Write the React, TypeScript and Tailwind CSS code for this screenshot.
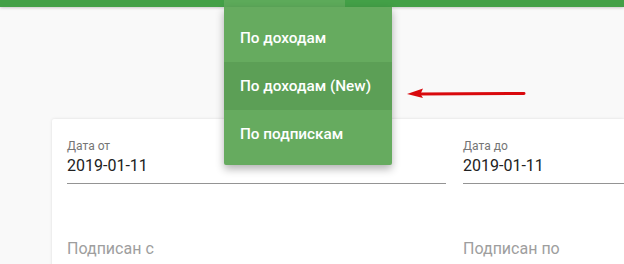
import React from "react";

function Field({ label, value }: { label: string; value: string }) {
  return (
    <div className="flex flex-col">
      <span className="text-[12px] leading-[14px] text-[#757575]">{label}</span>
      <span className="mt-[2px] pb-[6px] text-[16px] leading-[22px] text-[#212121] border-b border-[#949494]">
        {value}
      </span>
    </div>
  );
}

export default function App() {
  const items = ["По доходам", "По доходам (New)", "По подпискам"];

  return (
    <div className="relative w-[624px] h-[264px] overflow-hidden bg-[#f9f9f9] font-['Roboto',sans-serif]">
      {/* Top bar */}
      <div className="flex h-[7px] bg-[#43a047] shadow-[0_1px_3px_rgba(0,0,0,0.2)]">
        <div className="w-[224px]" />
        <div className="w-[121px] bg-[#5daa5a]" />
      </div>

      {/* Form card */}
      <div className="pl-[52px] pt-[112px]">
        <div className="bg-white h-[200px] rounded-tl-[2px] shadow-[0_0_3px_rgba(0,0,0,0.12)] pl-[15px] pt-[20px]">
          <div className="grid grid-cols-[379px_1fr] gap-x-[17px]">
            <Field label="Дата от" value="2019-01-11" />
            <Field label="Дата до" value="2019-01-11" />
            <div className="mt-[54px] text-[16px] leading-[22px] text-[#9e9e9e]">Подписан с</div>
            <div className="mt-[54px] text-[16px] leading-[22px] text-[#9e9e9e]">Подписан по</div>
          </div>
        </div>
      </div>

      {/* Dropdown menu */}
      <div className="absolute left-[224px] top-[7px] w-[168px] py-[7px] bg-[#66ab5f] rounded-b-[2px] shadow-[0_4px_8px_rgba(0,0,0,0.3)]">
        {items.map((item, i) => (
          <div
            key={item}
            className={`h-[48px] flex items-center px-[16px] text-[15.3px] font-medium text-white ${
              i === 1 ? "bg-[#5c9f56]" : ""
            }`}
          >
            {item}
          </div>
        ))}
      </div>

      {/* Annotation arrow */}
      <svg className="absolute left-[404px] top-[86px]" width="124" height="16" viewBox="0 0 124 16">
        <line x1="14" y1="8" x2="120" y2="7.5" stroke="#d9090d" strokeWidth="3" strokeLinecap="round" />
        <polygon points="3,8 19,2.5 16.5,8 19,12" fill="#d9090d" />
      </svg>
    </div>
  );
}
